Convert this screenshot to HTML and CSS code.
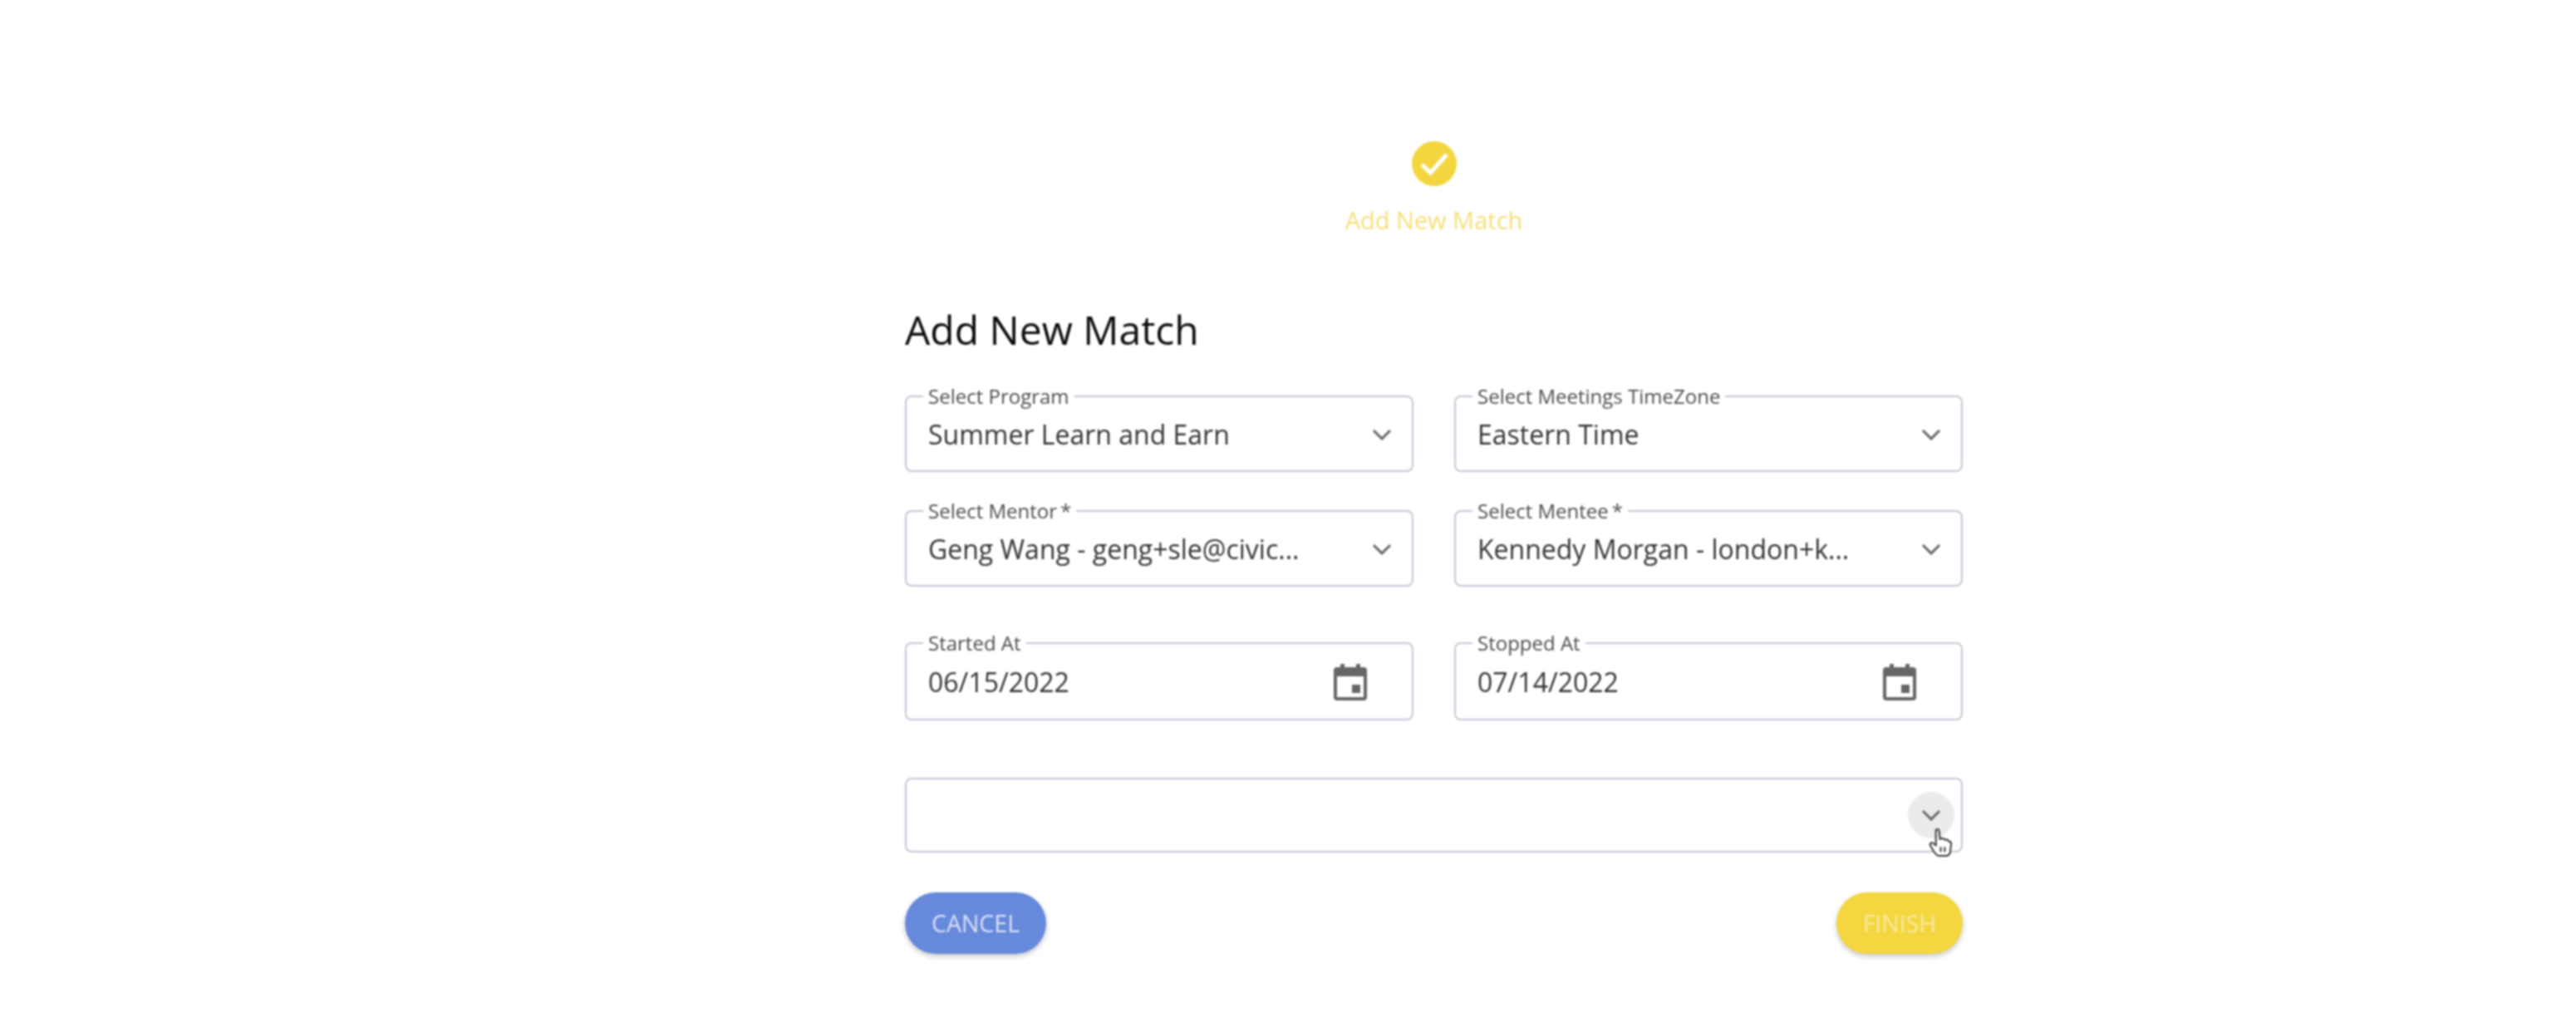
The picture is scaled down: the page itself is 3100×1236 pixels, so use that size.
FILE: index.html
```html
<!DOCTYPE html>
<html lang="en">
<head>
<meta charset="utf-8">
<title>Add New Match</title>
<link rel="stylesheet" href="styles.css">
</head>
<body>
<main class="form">
  <div class="step">
    <svg class="step-icon" viewBox="0 0 56 56"><circle cx="28" cy="28" r="27" fill="#f3d63f"/><path d="M13 29l10.500 10L43 17" fill="none" stroke="#fff" stroke-width="5"/></svg>
    <div class="step-label">Add New Match</div>
  </div>
  <h1 class="title">Add New Match</h1>
  <div class="grid">
    <fieldset class="field">
      <legend>Select Program</legend>
      <span class="value">Summer Learn and Earn</span>
      <svg class="chev" viewBox="0 0 24 14"><path d="M2 2l10 10L22 2"/></svg>
    </fieldset>
    <fieldset class="field">
      <legend>Select Meetings TimeZone</legend>
      <span class="value">Eastern Time</span>
      <svg class="chev" viewBox="0 0 24 14"><path d="M2 2l10 10L22 2"/></svg>
    </fieldset>
    <fieldset class="field">
      <legend>Select Mentor&#8201;*</legend>
      <span class="value">Geng Wang - geng+sle@civic...</span>
      <svg class="chev" viewBox="0 0 24 14"><path d="M2 2l10 10L22 2"/></svg>
    </fieldset>
    <fieldset class="field">
      <legend>Select Mentee&#8201;*</legend>
      <span class="value">Kennedy Morgan - london+k...</span>
      <svg class="chev" viewBox="0 0 24 14"><path d="M2 2l10 10L22 2"/></svg>
    </fieldset>
    <fieldset class="field date first-date">
      <legend>Started At</legend>
      <span class="value">06/15/2022</span>
      <svg class="cal" viewBox="0 0 40 44"><path fill="#666" fill-rule="evenodd" d="M8 0h5v4h14V0h5v4h4a4 4 0 0 1 4 4v32a4 4 0 0 1-4 4H4a4 4 0 0 1-4-4V8a4 4 0 0 1 4-4h4zM4 15v25h32V15zM22 25h10v10H22z"/></svg>
    </fieldset>
    <fieldset class="field date first-date">
      <legend>Stopped At</legend>
      <span class="value">07/14/2022</span>
      <svg class="cal" viewBox="0 0 40 44"><path fill="#666" fill-rule="evenodd" d="M8 0h5v4h14V0h5v4h4a4 4 0 0 1 4 4v32a4 4 0 0 1-4 4H4a4 4 0 0 1-4-4V8a4 4 0 0 1 4-4h4zM4 15v25h32V15zM22 25h10v10H22z"/></svg>
    </fieldset>
  </div>
  <div class="wide">
    <span class="chev-hover"><svg class="chev" viewBox="0 0 24 14"><path d="M2 2l10 10L22 2"/></svg></span>
    <svg class="cursor" viewBox="0 0 30 38"><path d="M9 3c2-2 4-1 4 1l1 10c2-1 5-1 6 1 2-1 4 0 5 2 2 0 3 1 3 3l-1 9c0 3-2 6-5 6H13c-3 0-5-3-7-6l-4-7c-1-2 1-4 3-3l4 3z" fill="#fff" stroke="#333" stroke-width="2"/><path d="M15 24v6M20 24v6" stroke="#333" stroke-width="2"/></svg>
  </div>
  <div class="actions">
    <button class="btn cancel" type="button">CANCEL</button>
    <button class="btn finish" type="button">FINISH</button>
  </div>
</main>
</body>
</html>
```

FILE: styles.css
```css
* { box-sizing: border-box; }
html, body { margin: 0; background: #fff; }
body { height: 1236px; overflow: hidden; font-family: "Open Sans", "Liberation Sans", sans-serif; }
.form { width: 1273px; margin-left: 1089px; padding-top: 169px; filter: blur(1px); }
.step { display: flex; flex-direction: column; align-items: center; }
.step-icon { width: 56px; height: 56px; display: block; }
.step-label { margin-top: 21px; font-size: 29px; line-height: 38px; color: #f6df76; }
.title { margin: 79px 0 0; height: 67px; font-size: 48px; line-height: 67px; font-weight: 400; color: #0c0c0c; }
.grid { display: grid; grid-template-columns: 612px 612px; justify-content: space-between; row-gap: 35px; margin-top: 35px; }
.field { margin: 0; min-width: 0; height: 103px; padding: 0 24px 10px 26px; border: 2px solid #c4c6d4; border-radius: 8px; display: flex; align-items: center; justify-content: space-between; }
.field legend { padding: 0 6px; margin-left: -6px; font-size: 24px; line-height: 24px; color: #4c4c4c; }
.value { font-size: 32px; line-height: 44px; color: #333; white-space: nowrap; }
.chev { width: 24px; height: 14px; fill: none; stroke: #666; stroke-width: 3; display: block; }
.date { height: 105px; padding-right: 54px; }
.first-date { margin-top: 21px; }
.cal { width: 40px; height: 44px; display: block; }
.wide { position: relative; margin-top: 69px; height: 90px; border: 2px solid #c4c6d4; border-radius: 8px; display: flex; align-items: center; justify-content: flex-end; padding-right: 8px; }
.chev-hover { width: 56px; height: 56px; border-radius: 50%; background: #ebebeb; display: flex; align-items: center; justify-content: center; }
.cursor { position: absolute; left: 1230px; top: 58px; width: 29px; height: 37px; }
.actions { display: flex; justify-content: space-between; margin-top: 48px; }
.btn { height: 74px; border: 0; border-radius: 37px; font-family: inherit; font-size: 28.500px; box-shadow: 0 3px 6px rgba(0,0,0,.22); }
.cancel { width: 170px; background: #6689db; color: #d9e1f5; }
.finish { width: 152px; background: #f3d640; color: #f9eb9f; }
```
